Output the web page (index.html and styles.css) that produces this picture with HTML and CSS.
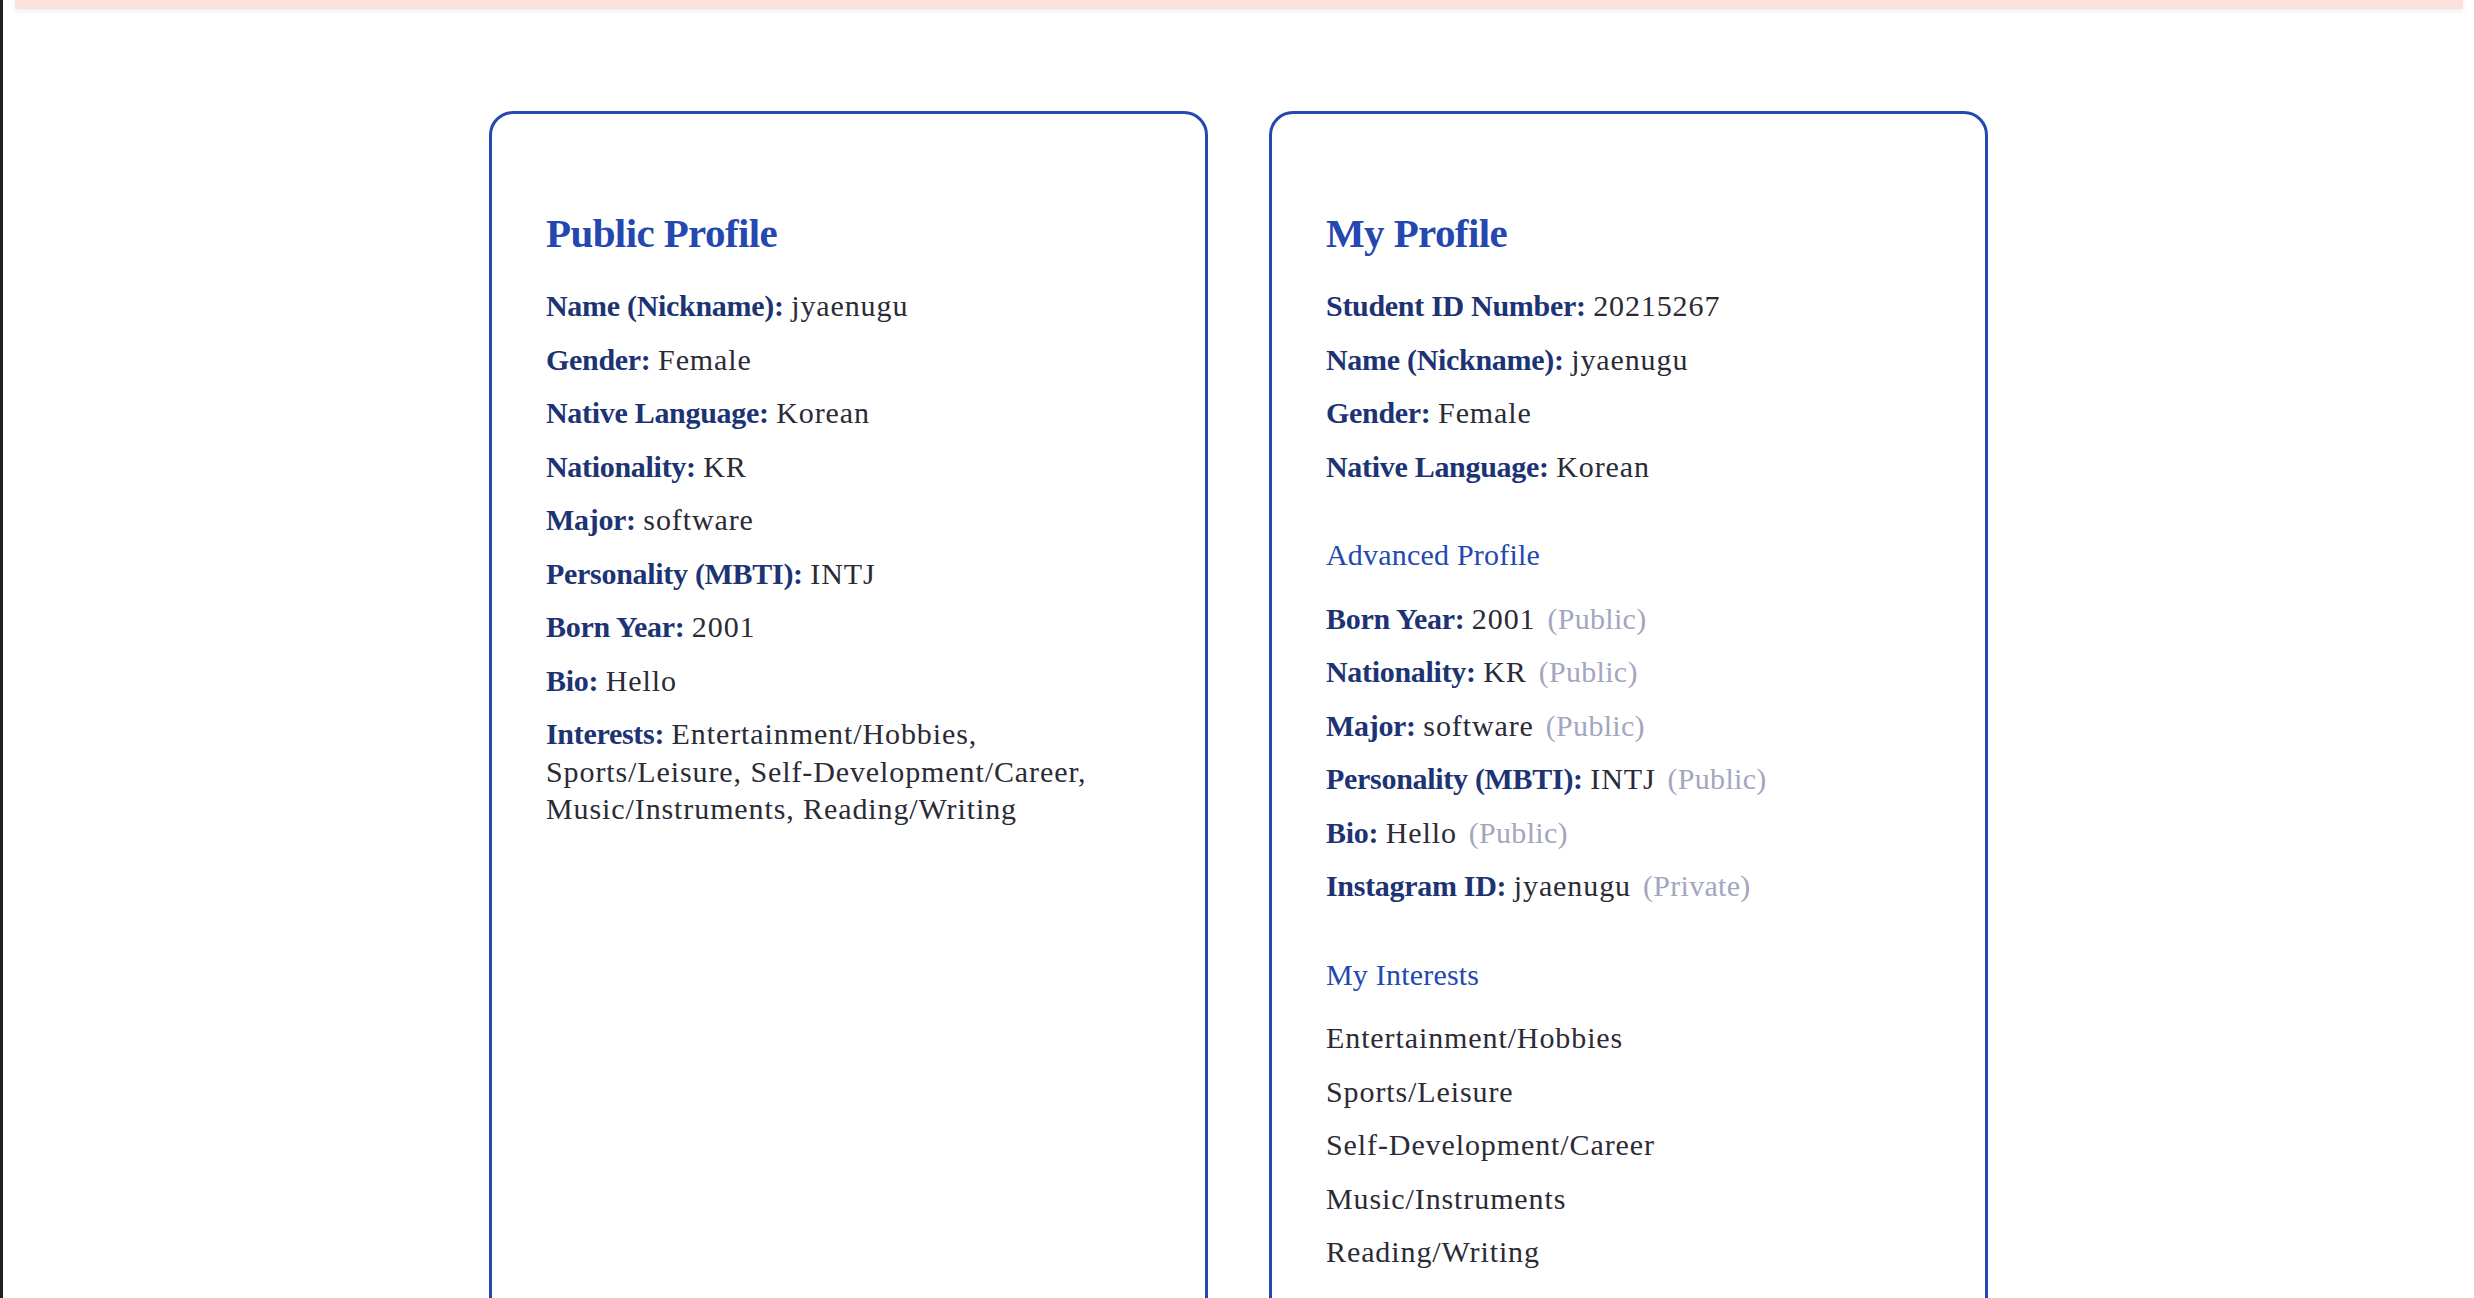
FILE: index.html
```html
<!DOCTYPE html>
<html lang="en">
<head>
<meta charset="utf-8">
<title>Profile</title>
<link rel="stylesheet" href="styles.css">
</head>
<body>
<div class="frame">
  <header class="topbar"></header>
  <main class="cards">
    <section class="card">
      <h2 class="card-title">Public Profile</h2>
      <p class="row"><span class="label">Name (Nickname):</span> <span class="value">jyaenugu</span></p>
      <p class="row"><span class="label">Gender:</span> <span class="value">Female</span></p>
      <p class="row"><span class="label">Native Language:</span> <span class="value">Korean</span></p>
      <p class="row"><span class="label">Nationality:</span> <span class="value">KR</span></p>
      <p class="row"><span class="label">Major:</span> <span class="value">software</span></p>
      <p class="row"><span class="label">Personality (MBTI):</span> <span class="value">INTJ</span></p>
      <p class="row"><span class="label">Born Year:</span> <span class="value">2001</span></p>
      <p class="row"><span class="label">Bio:</span> <span class="value">Hello</span></p>
      <p class="row"><span class="label">Interests:</span> <span class="value">Entertainment/Hobbies, Sports/Leisure, Self-Development/Career, Music/Instruments, Reading/Writing</span></p>
    </section>
    <section class="card">
      <h2 class="card-title">My Profile</h2>
      <p class="row"><span class="label">Student ID Number:</span> <span class="value">20215267</span></p>
      <p class="row"><span class="label">Name (Nickname):</span> <span class="value">jyaenugu</span></p>
      <p class="row"><span class="label">Gender:</span> <span class="value">Female</span></p>
      <p class="row"><span class="label">Native Language:</span> <span class="value">Korean</span></p>
      <h3 class="subtitle">Advanced Profile</h3>
      <p class="row"><span class="label">Born Year:</span> <span class="value">2001</span><span class="vis">(Public)</span></p>
      <p class="row"><span class="label">Nationality:</span> <span class="value">KR</span><span class="vis">(Public)</span></p>
      <p class="row"><span class="label">Major:</span> <span class="value">software</span><span class="vis">(Public)</span></p>
      <p class="row"><span class="label">Personality (MBTI):</span> <span class="value">INTJ</span><span class="vis">(Public)</span></p>
      <p class="row"><span class="label">Bio:</span> <span class="value">Hello</span><span class="vis">(Public)</span></p>
      <p class="row"><span class="label">Instagram ID:</span> <span class="value">jyaenugu</span><span class="vis">(Private)</span></p>
      <h3 class="subtitle">My Interests</h3>
      <p class="row value">Entertainment/Hobbies</p>
      <p class="row value">Sports/Leisure</p>
      <p class="row value">Self-Development/Career</p>
      <p class="row value">Music/Instruments</p>
      <p class="row value">Reading/Writing</p>
    </section>
  </main>
</div>
</body>
</html>
```
FILE: styles.css
```css
html, body {
  margin: 0;
  padding: 0;
  background: #ffffff;
}

body {
  font-family: "Liberation Serif", "DejaVu Serif", serif;
  color: #2a2b36;
}

.frame {
  border-left: 3px solid #222222;
  min-height: 100vh;
}

.topbar {
  height: 9px;
  margin: 0 11px 0 12px;
  background: #fbe1dc;
  box-shadow: 0 2px 6px rgba(0, 0, 0, 0.08);
}

.cards {
  display: flex;
  justify-content: center;
  align-items: stretch;
  gap: 61px;
  padding-top: 102px;
}

.card {
  box-sizing: border-box;
  width: 719px;
  border: 3px solid #2447b0;
  border-radius: 24px;
  padding: 94px 54px 110px 54px;
  background: #ffffff;
}

.card-title {
  margin: 0 0 29px 0;
  font-size: 41px;
  line-height: 50px;
  font-weight: 700;
  letter-spacing: -0.6px;
  color: #2447b0;
}

.row {
  margin: 0 0 16px 0;
  font-size: 30px;
  line-height: 37.5px;
}

.label {
  font-weight: 700;
  letter-spacing: -0.3px;
  color: #1c3374;
}

.value {
  letter-spacing: 0.9px;
  color: #2a2b36;
}

.vis {
  margin-left: 12px;
  letter-spacing: 0.3px;
  color: #a3a6c0;
}

.subtitle {
  margin: 51px 0 26px 0;
  font-size: 30px;
  line-height: 37.5px;
  font-weight: 400;
  letter-spacing: 0.2px;
  color: #2447b0;
}
```
